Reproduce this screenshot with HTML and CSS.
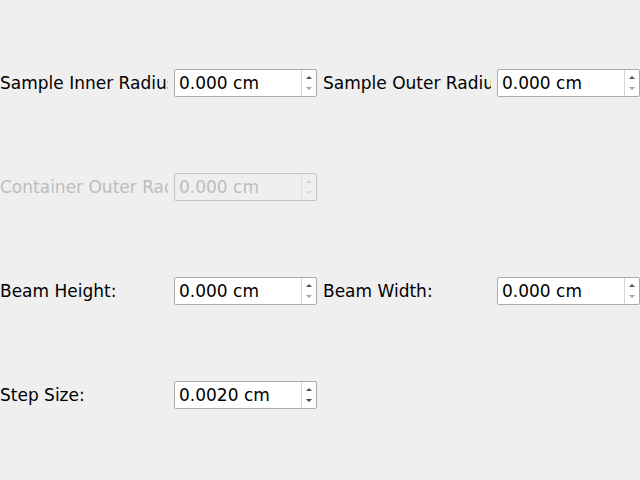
FILE: index.html
```html
<!DOCTYPE html>
<html>
<head>
<meta charset="utf-8">
<link rel="stylesheet" href="styles.css">
</head>
<body>
<div class="form">
  <div class="label">Sample Inner Radius:</div>
  <div class="spin"><span class="val">0.000 cm</span><div class="btns"><span class="up"></span><span class="down off"></span></div></div>
  <div class="label">Sample Outer Radius:</div>
  <div class="spin"><span class="val">0.000 cm</span><div class="btns"><span class="up"></span><span class="down off"></span></div></div>

  <div class="label dis">Container Outer Radius:</div>
  <div class="spin dis"><span class="val">0.000 cm</span><div class="btns"><span class="up"></span><span class="down"></span></div></div>
  <div></div><div></div>

  <div class="label">Beam Height:</div>
  <div class="spin"><span class="val">0.000 cm</span><div class="btns"><span class="up"></span><span class="down off"></span></div></div>
  <div class="label">Beam Width:</div>
  <div class="spin"><span class="val">0.000 cm</span><div class="btns"><span class="up"></span><span class="down off"></span></div></div>

  <div class="label">Step Size:</div>
  <div class="spin"><span class="val">0.0020 cm</span><div class="btns"><span class="up"></span><span class="down"></span></div></div>
  <div></div><div></div>
</div>
</body>
</html>
```
FILE: styles.css
```css
html, body {
  margin: 0;
  padding: 0;
  background: #efefef;
  width: 640px;
  height: 480px;
  overflow: hidden;
  font-family: "DejaVu Sans", sans-serif;
  font-size: 17px;
  color: #000;
}
.form {
  display: grid;
  grid-template-columns: 168px 143px 168px 143px;
  grid-auto-rows: 104px;
  column-gap: 6px;
  align-items: center;
  padding-top: 31px;
}
.label {
  white-space: nowrap;
  overflow: hidden;
  line-height: 20px;
}
.label.dis { color: #bdbdbd; }
.spin {
  box-sizing: border-box;
  height: 28px;
  border: 1px solid #ababab;
  border-radius: 2px;
  background: #fff;
  display: flex;
  align-items: center;
}
.spin.dis {
  background: #efefef;
  border-color: #c4c4c4;
  color: #bdbdbd;
}
.val {
  flex: 1;
  padding-left: 4px;
  line-height: 20px;
  white-space: nowrap;
}
.btns {
  width: 14px;
  height: 100%;
  border-left: 1px solid #d6d6d6;
  display: flex;
  flex-direction: column;
  justify-content: center;
  align-items: center;
  gap: 8px;
}
.spin.dis .btns { border-left-color: #e0e0e0; }
.up, .down {
  width: 0;
  height: 0;
  border-left: 3.5px solid transparent;
  border-right: 3.5px solid transparent;
}
.up { border-bottom: 3px solid #505050; }
.down { border-top: 3px solid #404040; }
.down.off { border-top-color: #a8a8a8; }
.spin.dis .up { border-bottom-color: #cfcfcf; }
.spin.dis .down { border-top-color: #d8d8d8; }
```
